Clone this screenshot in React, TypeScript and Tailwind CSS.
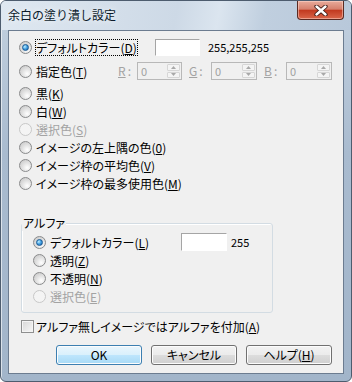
const ui = "font-['Noto_Sans_CJK_JP',sans-serif] [font-feature-settings:'palt']";

function Radio({ checked = false, disabled = false }: { checked?: boolean; disabled?: boolean }) {
  if (disabled) {
    return (
      <span className="flex h-[13px] w-[13px] shrink-0 rounded-full border border-[#c8c8c8] bg-[#f4f4f4]" />
    );
  }
  return (
    <span className="flex h-[13px] w-[13px] shrink-0 items-center justify-center rounded-full border border-[#8a8b8c] bg-[radial-gradient(circle_at_65%_70%,#ffffff,#e2e2e2_45%,#c2c2c2)]">
      {checked && (
        <span className="h-[7px] w-[7px] rounded-full border border-[#1a5b95] bg-[radial-gradient(circle_at_35%_35%,#c4f0ff,#49a6e6_45%,#13569e)]" />
      )}
    </span>
  );
}

function Label({ text, mn, disabled = false, focus = false }: { text: string; mn: string; disabled?: boolean; focus?: boolean }) {
  return (
    <span
      className={
        (focus ? "border border-dotted border-black " : "border border-transparent ") +
        (disabled ? "text-[#a3a3a3]" : "text-black") +
        " leading-[15px] whitespace-nowrap"
      }
    >
      {text}(<u>{mn}</u>)
    </span>
  );
}

function RadioRow({ text, mn, checked, disabled, focus }: { text: string; mn: string; checked?: boolean; disabled?: boolean; focus?: boolean }) {
  return (
    <div className="flex h-[18px] items-center">
      <Radio checked={checked} disabled={disabled} />
      <span className="ml-[3px] flex">
        <Label text={text} mn={mn} disabled={disabled} focus={focus} />
      </span>
    </div>
  );
}

function Arrow({ up }: { up?: boolean }) {
  return (
    <svg width="5" height="3" viewBox="0 0 5 3">
      <path d={up ? "M0 3 L2.5 0 L5 3 Z" : "M0 0 L2.5 3 L5 0 Z"} fill="#a8a8a8" />
    </svg>
  );
}

function Spin({ w }: { w: string }) {
  return (
    <div className={"flex h-[18px] border border-[#b8b8b8] bg-[#f0f0f0] " + w}>
      <span className="flex-1 pl-[3px] text-[11px] leading-[16px] text-[#a0a0a0]">0</span>
      <div className="my-[1px] mr-[1px] flex w-[13px] flex-col gap-[1px]">
        <div className="flex flex-1 items-center justify-center rounded-[1px] border border-[#d6d6d6] bg-[#f4f4f4]">
          <Arrow up />
        </div>
        <div className="flex flex-1 items-center justify-center rounded-[1px] border border-[#d6d6d6] bg-[#f4f4f4]">
          <Arrow />
        </div>
      </div>
    </div>
  );
}

function ChanLabel({ c, w }: { c: string; w: string }) {
  return (
    <span className={"text-[#a3a3a3] leading-[18px] " + w}>
      <u>{c}</u>
      <span className="ml-[2px]">:</span>
    </span>
  );
}

function ColorBox({ w, h }: { w: string; h: string }) {
  return <div className={"border-t border-l border-[#a5a5a5] border-r-white border-b-white border-r border-b bg-white " + w + " " + h} />;
}

function Button({ children, primary = false }: { children: React.ReactNode; primary?: boolean }) {
  return (
    <button
      className={
        "flex h-[20px] w-[86px] items-center justify-center rounded-[3px] border text-[12px] leading-[16px] text-black shadow-[inset_0_0_0_1px_#fcfcfc] " +
        (primary
          ? "border-[#3c7fb1] bg-[linear-gradient(#eaf6fd,#d9f0fc_50%,#bee6fd_50%,#a7d9f5)]"
          : "border-[#707070] bg-[linear-gradient(#f2f2f2,#ebebeb_50%,#dddddd_50%,#cfcfcf)]")
      }
    >
      {children}
    </button>
  );
}

export default function App() {
  return (
    <div className={"h-[382px] w-[352px] overflow-hidden bg-white text-[12px] " + ui}>
      <div className="flex h-[382px] w-[352px] flex-col overflow-hidden rounded-[6px] border border-[#4d5c6e] bg-[linear-gradient(180deg,#c3d1e0,#a9bbcf_40%,#a2b5ca)] px-[7px] pb-[7px] shadow-[inset_1px_1px_0_rgba(255,255,255,0.6)]">
        <div className="-mx-[7px] flex h-[29px] items-start justify-between bg-[linear-gradient(100deg,#dfe8f1,#cdd9e6_50%,#dbe5ef_62%,#c0cfdf_75%,#b8c8da)] px-[7px]">
          <span className="pt-[6px] text-[12px] leading-[16px] text-[#0c1a2b] [font-feature-settings:normal] [text-shadow:0_0_6px_#ffffff]">
            余白の塗り潰し設定
          </span>
          <div className="flex h-[19px] w-[47px] items-center justify-center rounded-b-[4px] border border-t-0 border-[#5a2a22] bg-[linear-gradient(#e9ab9b,#d6806d_45%,#c23a20_52%,#d9664a)] shadow-[inset_0_0_0_1px_rgba(255,220,210,0.5)]">
            <svg width="14" height="11" viewBox="0 0 14 11">
              <path d="M2.5 1.5 L11.5 9.5 M11.5 1.5 L2.5 9.5" stroke="#3a1712" strokeWidth="4.2" strokeLinecap="round" />
              <path d="M2.5 1.5 L11.5 9.5 M11.5 1.5 L2.5 9.5" stroke="#ffffff" strokeWidth="2.4" strokeLinecap="round" />
            </svg>
          </div>
        </div>

        <div className="h-[344px] border border-[#6c7c90] bg-[#f0f0f0] pl-[10px] pt-[7px]">
          <div className="flex h-[18px] items-center">
            <div className="flex w-[136px] items-center">
              <Radio checked />
              <span className="ml-[3px] flex">
                <Label text="デフォルトカラー" mn="D" focus />
              </span>
            </div>
            <ColorBox w="w-[45px]" h="h-[17px]" />
            <span className="ml-[8px] text-[11px] leading-[18px] text-black">255,255,255</span>
          </div>

          <div className="mt-[6px] flex h-[18px] items-center">
            <div className="flex w-[99px] items-center">
              <Radio />
              <span className="ml-[3px] flex">
                <Label text="指定色" mn="T" />
              </span>
            </div>
            <ChanLabel c="R" w="w-[19px]" />
            <Spin w="w-[45px]" />
            <span className="ml-[7px]" />
            <ChanLabel c="G" w="w-[22px]" />
            <Spin w="w-[46px]" />
            <span className="ml-[7px]" />
            <ChanLabel c="B" w="w-[22px]" />
            <Spin w="w-[46px]" />
          </div>

          <div className="mt-[4px] flex flex-col">
            <RadioRow text="黒" mn="K" />
            <RadioRow text="白" mn="W" />
            <RadioRow text="選択色" mn="S" disabled />
            <RadioRow text="イメージの左上隅の色" mn="0" />
            <RadioRow text="イメージ枠の平均色" mn="V" />
            <RadioRow text="イメージ枠の最多使用色" mn="M" />
          </div>

          <div className="relative ml-[2px] mt-[31px] h-[90px] w-[252px] rounded-[3px] border border-[#d3dce3] pl-[11px] pt-[9px] shadow-[inset_1px_1px_0_#ffffff]">
            <span className="absolute left-[0px] top-[-9px] bg-[#f0f0f0] px-[1px] leading-[16px] text-black">アルファ</span>
            <div className="flex h-[18px] items-center">
              <div className="flex w-[148px] items-center">
                <Radio checked />
                <span className="ml-[3px] flex">
                  <Label text="デフォルトカラー" mn="L" />
                </span>
              </div>
              <ColorBox w="w-[46px]" h="h-[18px]" />
              <span className="ml-[4px] text-[11px] leading-[18px] text-black">255</span>
            </div>
            <RadioRow text="透明" mn="Z" />
            <RadioRow text="不透明" mn="N" />
            <RadioRow text="選択色" mn="E" disabled />
          </div>

          <div className="ml-[2px] mt-[4px] flex h-[18px] items-center">
            <span className="h-[13px] w-[13px] shrink-0 border border-[#8e8f8f] bg-[linear-gradient(135deg,#d6d6d6,#f7f7f7)] shadow-[inset_0_0_0_1px_#f4f4f4]" />
            <span className="ml-[2px] leading-[15px] text-black">
              アルファ無しイメージではアルファを付加(<u>A</u>)
            </span>
          </div>

          <div className="ml-[37px] mt-[10px] flex gap-[9px]">
            <Button primary>OK</Button>
            <Button>キャンセル</Button>
            <Button>
              ヘルプ(<u>H</u>)
            </Button>
          </div>
        </div>
      </div>
    </div>
  );
}
